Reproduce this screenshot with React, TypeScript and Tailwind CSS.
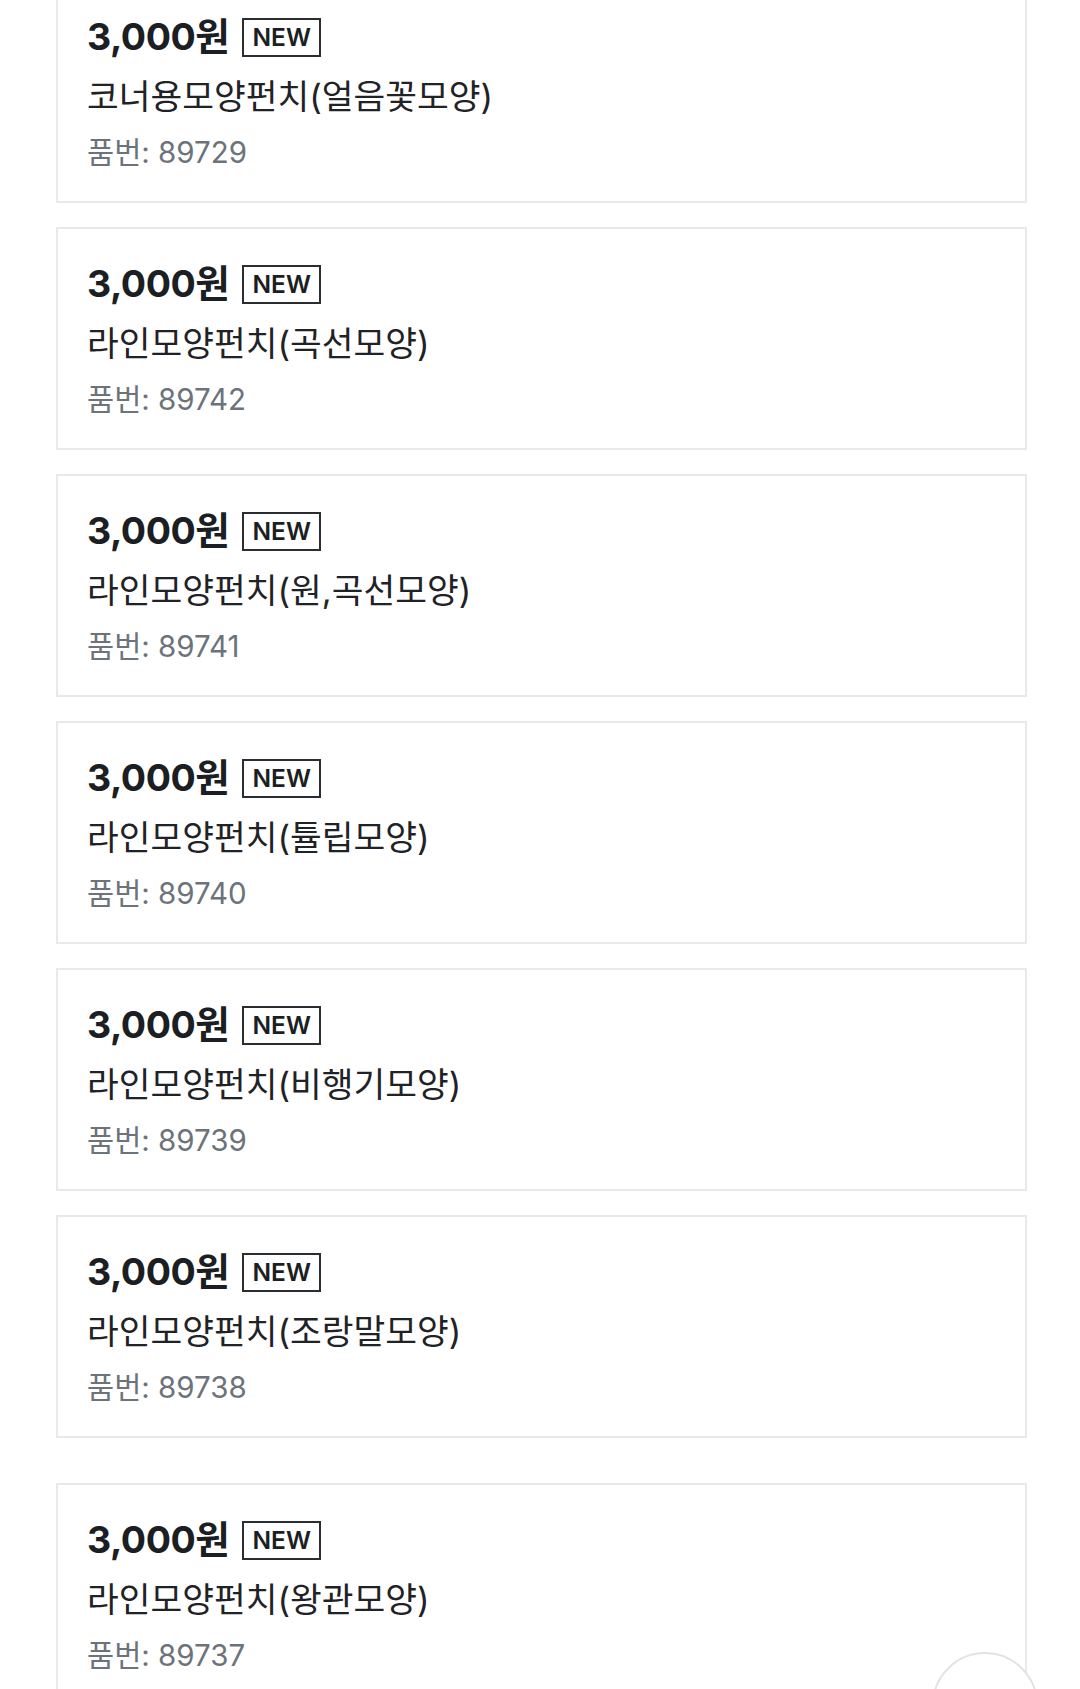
import React from "react";

const items = [
  { name: "코너용모양펀치(얼음꽃모양)", code: "89729" },
  { name: "라인모양펀치(곡선모양)", code: "89742" },
  { name: "라인모양펀치(원,곡선모양)", code: "89741" },
  { name: "라인모양펀치(튤립모양)", code: "89740" },
  { name: "라인모양펀치(비행기모양)", code: "89739" },
  { name: "라인모양펀치(조랑말모양)", code: "89738" },
];

function Card({ name, code }: { name: string; code: string }) {
  return (
    <div className="w-[971px] h-[223px] border-2 border-[#e9e9e9] bg-white pl-[29px] pt-[35px]">
      <div className="flex items-center h-[40px]">
        <span className="text-[37.5px] leading-[40px] font-bold text-[#1b1e22] tracking-[-0.5px]">3,000원</span>
        <span className="ml-[13px] h-[39px] w-[79px] border-2 border-[#2a2d31] flex items-center justify-center text-[24.5px] font-semibold text-[#1b1e22]">
          NEW
        </span>
      </div>
      <div className="mt-[20px] text-[34.5px] leading-[40px] text-[#1f2226]">{name}</div>
      <div className="mt-[17px] text-[29.5px] leading-[36px] text-[#6c737a]">품번: {code}</div>
    </div>
  );
}

export default function App() {
  return (
    <div
      className="relative w-[1080px] h-[1689px] overflow-hidden bg-white"
      style={{ fontFamily: 'Inter, "Noto Sans CJK KR", sans-serif' }}
    >
      <div className="pl-[56px] -mt-[20px] flex flex-col">
        <div className="flex flex-col gap-[24px]">
          {items.map((it) => (
            <Card key={it.code} name={it.name} code={it.code} />
          ))}
        </div>
        <div className="mt-[45px]">
          <Card name="라인모양펀치(왕관모양)" code="89737" />
        </div>
      </div>
      <div className="absolute left-[932px] top-[1652px] w-[106px] h-[106px] rounded-full bg-white border-2 border-[#e3e3e3]" />
    </div>
  );
}
